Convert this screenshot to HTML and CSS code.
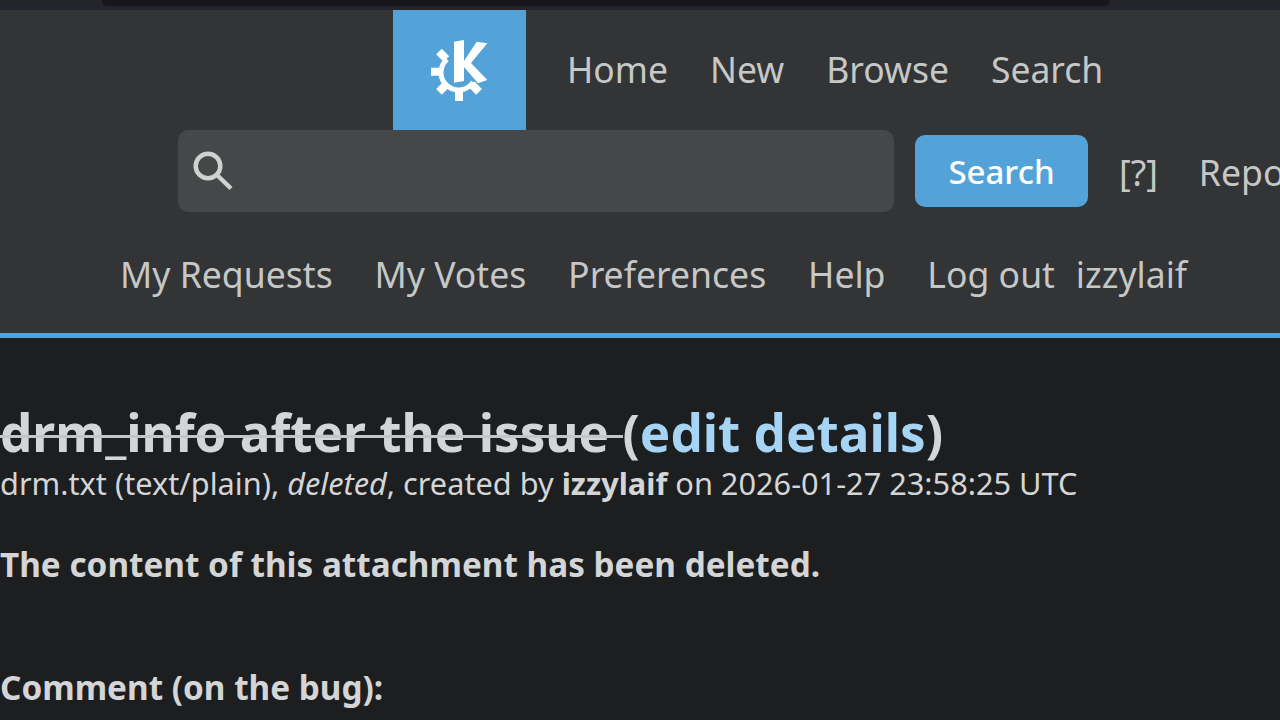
FILE: index.html
```html
<!DOCTYPE html>
<html lang="en">
<head>
<meta charset="utf-8">
<title>drm_info after the issue</title>
<link rel="stylesheet" href="styles.css">
</head>
<body>
<div class="top-strip"><div class="top-tab"></div></div>
<header class="header">
  <nav class="main-nav">
    <a class="logo" href="#" aria-label="KDE">
      <svg width="58" height="61" viewBox="0 0 58 61">
        <path class="logo-k" d="M23 1.700 L33 0 L33 21 L45.700 1.700 L56.300 3.300 L40 23 L56.300 40 L47 43.300 L33 27 L33 41 L23 42.700 Z"/>
        <g class="logo-gear">
          <path class="gear-ring" d="M16 19.300 A17.500 17.500 0 1 0 42.200 42"/>
          <path d="M11 31.700 L0 31.700"/>
          <path d="M15.300 19 L8 11.500"/>
          <path d="M15.300 44.400 L8 51.900"/>
          <path d="M28 49.700 L28 61"/>
          <path d="M40.700 44.400 L48 51.900"/>
        </g>
      </svg>
    </a>
    <a class="nav-link" href="#">Home</a>
    <a class="nav-link" href="#">New</a>
    <a class="nav-link" href="#">Browse</a>
    <a class="nav-link" href="#">Search</a>
  </nav>
  <div class="search-row">
    <div class="search-box">
      <svg class="search-icon" width="40" height="40" viewBox="0 0 40 40">
        <circle cx="15" cy="15" r="12.300"/>
        <path d="M24 24 L38 37.500"/>
      </svg>
    </div>
    <button class="search-btn" type="button">Search</button>
    <a class="nav-link help" href="#">[?]</a>
    <a class="nav-link report" href="#">Reports</a>
  </div>
  <nav class="user-nav">
    <a class="nav-link" href="#">My Requests</a>
    <a class="nav-link" href="#">My Votes</a>
    <a class="nav-link" href="#">Preferences</a>
    <a class="nav-link" href="#">Help</a>
    <a class="nav-link" href="#">Log out</a>
    <span class="nav-link username">izzylaif</span>
  </nav>
</header>
<main class="content">
  <h1 class="title"><span class="struck">drm_info after the issue </span>(<a class="edit" href="#">edit details</a>)</h1>
  <p class="meta">drm.txt (text/plain), <em>deleted</em>, created by <strong>izzylaif</strong> on 2026-01-27 23:58:25 UTC</p>
  <p class="notice">The content of this attachment has been deleted.</p>
  <p class="comment">Comment (on the bug):</p>
</main>
</body>
</html>
```
FILE: styles.css
```css
html, body {
  margin: 0;
  height: 720px;
  overflow: hidden;
  background: #1c1e20;
  color: #dcdddd;
  font-family: "Noto Sans", sans-serif;
}
.top-strip {
  height: 10px;
  background: #24242c;
  padding-left: 102px;
}
.top-tab {
  width: 1008px;
  height: 6px;
  background: #16161b;
  border-bottom-right-radius: 5px;
  border-bottom-left-radius: 5px;
}
.header {
  height: 323px;
  background: #323436;
  border-bottom: 5px solid #54a3d8;
  overflow: hidden;
}
.nav-link {
  color: #c6c7c7;
  font-size: 35.600px;
  line-height: 46px;
  text-decoration: none;
  white-space: nowrap;
}
.main-nav {
  display: flex;
  align-items: center;
  gap: 42px;
  height: 120px;
  padding-left: 393px;
}
.main-nav .nav-link { margin-top: -2px; font-size: 35.500px; }
.main-nav .logo { margin-right: -1px; }
.logo {
  width: 133px;
  height: 120px;
  background: #54a3d8;
  display: flex;
  align-items: center;
  justify-content: center;
}
.logo-k { fill: #fff; }
.logo-gear {
  fill: none;
  stroke: #fff;
  stroke-width: 8px;
}
.logo-gear .gear-ring { stroke-width: 5px; }
.search-row {
  display: flex;
  align-items: center;
  height: 82px;
  padding-left: 178px;
  width: 1400px;
}
.search-box {
  width: 716px;
  height: 82px;
  flex: none;
  box-sizing: border-box;
  background: #454749;
  border-radius: 10px;
  display: flex;
  align-items: center;
  padding-left: 15px;
}
.search-icon {
  fill: none;
  stroke: #d0d1d1;
  stroke-width: 4.500;
}
.search-btn {
  margin-left: 21px;
  width: 173px;
  height: 72px;
  flex: none;
  border: 0;
  border-radius: 10px;
  background: #54a3d8;
  color: #fff;
  font: 500 33px "Noto Sans", sans-serif;
}
.search-row .nav-link { padding-top: 2px; }
.help { margin-left: 31px; }
.report { margin-left: 41px; }
.user-nav {
  display: flex;
  align-items: center;
  gap: 41.800px;
  height: 46px;
  margin-top: 39px;
  padding-left: 120px;
}
.username { margin-left: -21px; }
.content { padding-top: 66px; }
.title {
  margin: 0;
  font-size: 51.200px;
  font-weight: 700;
  line-height: 56px;
  color: #d4d5d6;
}
.struck { position: relative; }
.struck::after {
  content: "";
  position: absolute;
  left: 0;
  right: 0;
  top: 38px;
  height: 3px;
  background: #c4c5c6;
}
.edit { color: #a5d4f5; text-decoration: none; }
.meta {
  margin: 0;
  font-size: 30.720px;
  line-height: 40px;
  color: #d4d5d6;
  padding-top: 3px;
}
.notice, .comment {
  margin: 0;
  font-size: 33.300px;
  font-weight: 700;
  line-height: 42px;
  color: #d4d5d6;
}
.notice { margin-top: 40px; }
.comment { margin-top: 81px; }
```
